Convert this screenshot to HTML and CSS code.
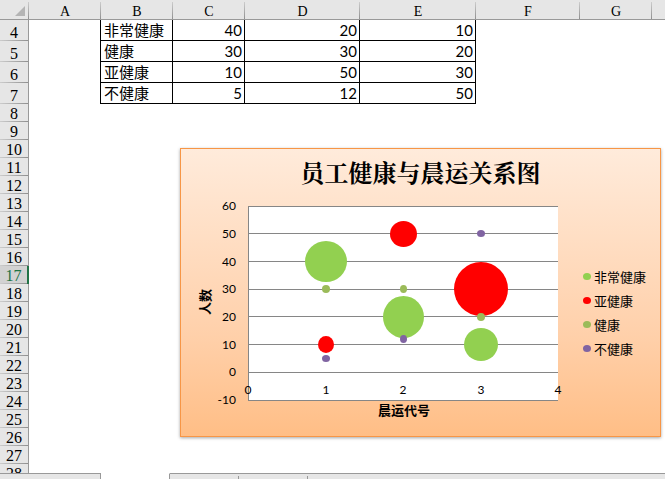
FILE: index.html
```html
<!DOCTYPE html>
<html lang="zh-CN">
<head>
<meta charset="utf-8">
<title>员工健康与晨运关系图</title>
<link rel="stylesheet" href="styles.css">
</head>
<body>
<main class="sheet">
  <table class="grid">
    <colgroup>
      <col class="col-head"><col class="col-std"><col class="col-std"><col class="col-std">
      <col class="col-d"><col class="col-e"><col class="col-f"><col class="col-std"><col>
    </colgroup>
    <thead>
      <tr>
        <th class="corner"><svg class="corner-mark" viewBox="0 0 10 10" aria-hidden="true"><path d="M10 0V10H0Z"/></svg></th>
        <th scope="col">A</th><th scope="col">B</th><th scope="col">C</th><th scope="col">D</th><th scope="col">E</th><th scope="col">F</th><th scope="col">G</th><th></th>
      </tr>
    </thead>
    <tbody>
      <tr class="data"><th scope="row">4</th><td class="edge"></td><td class="cell name">非常健康</td><td class="cell">40</td><td class="cell">20</td><td class="cell">10</td><td></td><td></td><td></td></tr>
      <tr class="data"><th scope="row">5</th><td class="edge"></td><td class="cell name">健康</td><td class="cell">30</td><td class="cell">30</td><td class="cell">20</td><td></td><td></td><td></td></tr>
      <tr class="data"><th scope="row">6</th><td class="edge"></td><td class="cell name">亚健康</td><td class="cell">10</td><td class="cell">50</td><td class="cell">30</td><td></td><td></td><td></td></tr>
      <tr class="data"><th scope="row">7</th><td class="edge"></td><td class="cell name">不健康</td><td class="cell">5</td><td class="cell">12</td><td class="cell">50</td><td></td><td></td><td></td></tr>
      <tr><th scope="row">8</th><td colspan="8"></td></tr>
      <tr><th scope="row">9</th><td colspan="8"></td></tr>
      <tr><th scope="row">10</th><td colspan="8"></td></tr>
      <tr><th scope="row">11</th><td colspan="8"></td></tr>
      <tr><th scope="row">12</th><td colspan="8"></td></tr>
      <tr><th scope="row">13</th><td colspan="8"></td></tr>
      <tr><th scope="row">14</th><td colspan="8"></td></tr>
      <tr><th scope="row">15</th><td colspan="8"></td></tr>
      <tr><th scope="row">16</th><td colspan="8"></td></tr>
      <tr class="current"><th scope="row">17</th><td colspan="8"></td></tr>
      <tr><th scope="row">18</th><td colspan="8"></td></tr>
      <tr><th scope="row">19</th><td colspan="8"></td></tr>
      <tr><th scope="row">20</th><td colspan="8"></td></tr>
      <tr><th scope="row">21</th><td colspan="8"></td></tr>
      <tr><th scope="row">22</th><td colspan="8"></td></tr>
      <tr><th scope="row">23</th><td colspan="8"></td></tr>
      <tr><th scope="row">24</th><td colspan="8"></td></tr>
      <tr><th scope="row">25</th><td colspan="8"></td></tr>
      <tr><th scope="row">26</th><td colspan="8"></td></tr>
      <tr><th scope="row">27</th><td colspan="8"></td></tr>
      <tr><th scope="row">28</th><td colspan="8"></td></tr>
    </tbody>
  </table>

  <section class="chart">
    <h1 class="chart-title">员工健康与晨运关系图</h1>
    <div class="chart-body">
      <svg class="plot" viewBox="190 198 380 224" role="img" aria-label="气泡图">
        <rect x="248" y="206" width="310" height="195" fill="#fff"/>
        <g class="lines">
          <path d="M248 206.5H558M248 233.5H558M248 261.5H558M248 289.5H558M248 316.5H558M248 344.5H558M248 372.5H558M248 400.5H558M248.5 206V401"/>
        </g>
        <g class="very-healthy">
          <ellipse cx="326" cy="261.5" rx="21" ry="20.5"/>
          <ellipse cx="403.5" cy="317" rx="20.5" ry="21"/>
          <ellipse cx="481" cy="344.5" rx="17" ry="16.5"/>
        </g>
        <g class="sub-healthy">
          <ellipse cx="326" cy="344.5" rx="8" ry="8.5"/>
          <ellipse cx="403.5" cy="234" rx="13.5" ry="13"/>
          <ellipse cx="481" cy="289" rx="27" ry="27"/>
        </g>
        <g class="healthy">
          <ellipse cx="326" cy="289" rx="4" ry="4"/>
          <ellipse cx="403.5" cy="289" rx="3.5" ry="4"/>
          <ellipse cx="481" cy="317" rx="4" ry="4"/>
        </g>
        <g class="unhealthy">
          <ellipse cx="326" cy="358.5" rx="4" ry="3.5"/>
          <ellipse cx="403.5" cy="339" rx="3.5" ry="4"/>
          <ellipse cx="481" cy="233.5" rx="4" ry="3.5"/>
        </g>
        <g class="ticks ticks-y">
          <text x="236" y="210">60</text><text x="236" y="238">50</text><text x="236" y="266">40</text><text x="236" y="293">30</text><text x="236" y="321">20</text><text x="236" y="349">10</text><text x="236" y="376">0</text><text x="236" y="404">-10</text>
        </g>
        <g class="ticks ticks-x">
          <text x="248" y="394">0</text><text x="326" y="394">1</text><text x="403" y="394">2</text><text x="481" y="394">3</text><text x="558" y="394">4</text>
        </g>
        <text class="axis-title" x="404" y="415">晨运代号</text>
        <text class="axis-title" transform="translate(210 302) rotate(-90)">人数</text>
      </svg>
      <ul class="legend">
        <li><svg class="dot very-healthy" viewBox="0 0 8 7" aria-hidden="true"><ellipse cx="4" cy="3.5" rx="4" ry="3.5"/></svg>非常健康</li>
        <li><svg class="dot sub-healthy" viewBox="0 0 8 7" aria-hidden="true"><ellipse cx="4" cy="3.5" rx="4" ry="3.5"/></svg>亚健康</li>
        <li><svg class="dot healthy" viewBox="0 0 8 7" aria-hidden="true"><ellipse cx="4" cy="3.5" rx="4" ry="3.5"/></svg>健康</li>
        <li><svg class="dot unhealthy" viewBox="0 0 8 7" aria-hidden="true"><ellipse cx="4" cy="3.5" rx="4" ry="3.5"/></svg>不健康</li>
      </ul>
    </div>
  </section>
</main>
<footer class="tabs">
  <div class="tabs-nav"></div>
  <div class="tab-active"></div>
  <div class="tab"></div>
  <div class="tab"></div>
  <div class="tabs-rest"></div>
</footer>
</body>
</html>
```
FILE: styles.css
```css
* {
  box-sizing: border-box;
}

body {
  margin: 0;
  height: 100vh;
  display: flex;
  flex-direction: column;
  overflow: hidden;
  background: #fff;
  color: #000;
  font-family: "Noto Sans CJK SC", sans-serif;
}

.sheet {
  position: relative;
  flex: 1;
  min-height: 0;
  overflow: hidden;
}

/* Cell grid */
.grid {
  width: 100%;
  table-layout: fixed;
  border-collapse: separate;
  border-spacing: 0;
}

.col-head { width: 29px; }
.col-std { width: 72px; }
.col-d { width: 115px; }
.col-e { width: 116px; }
.col-f { width: 104px; }

.grid th,
.grid td {
  height: 18px;
  padding: 0;
  line-height: 16px;
}

.grid th {
  background: #e6e6e6;
  font-family: "Liberation Serif", serif;
  font-size: 16px;
  font-weight: 400;
  text-align: center;
  vertical-align: bottom;
}

.grid thead th {
  height: 20px;
  border-bottom: 1px solid #999;
  font-size: 14px;
  line-height: 14px;
  background: linear-gradient(#ccc, #909090) right bottom / 1px 17px no-repeat #e6e6e6;
}

.grid thead th:last-child {
  background: #e6e6e6;
}

.grid tbody th {
  border-right: 1px solid #999;
  background: linear-gradient(to right, #ccc, #909090) left bottom / 100% 1px no-repeat #e6e6e6;
}

.grid .data th,
.grid .data td {
  height: 21px;
}

.grid .corner {
  padding: 0 4px 3px 0;
  text-align: right;
}

.corner-mark {
  display: block;
  width: 10px;
  height: 10px;
  margin-left: auto;
  fill: #b4b4b4;
}

.grid .edge {
  border-right: 1px solid #000;
}

.grid .cell {
  border-right: 1px solid #000;
  border-bottom: 1px solid #000;
  padding-right: 2px;
  font-family: Lato, sans-serif;
  font-size: 15px;
  text-align: right;
}

.grid .name {
  padding: 0 0 0 3px;
  font-family: "Noto Sans CJK SC", sans-serif;
  text-align: left;
}

.grid .current th {
  border-right: 2px solid #217346;
  background-color: #d2d2d2;
  color: #217346;
}

/* Floating chart */
.chart {
  position: absolute;
  left: 180px;
  top: 148px;
  width: 481px;
  padding: 7px 9px 14px;
  border: 1px solid #f79646;
  background: linear-gradient(#ffebdb, #ffd0aa 65%, #ffbe86);
  box-shadow: 0 1px 3px rgba(0, 0, 0, 0.35);
}

.chart-title {
  margin: 0 0 10px;
  font-family: "Noto Serif CJK SC", "Noto Sans CJK SC", serif;
  font-size: 24px;
  font-weight: 700;
  line-height: 32px;
  text-align: center;
}

.chart-body {
  display: flex;
  align-items: center;
  gap: 13px;
}

.plot {
  display: block;
  width: 380px;
  height: 224px;
}

.lines {
  fill: none;
  stroke: #868686;
}

.very-healthy { fill: #92d050; }
.sub-healthy { fill: #f00; }
.healthy { fill: #9bbb59; }
.unhealthy { fill: #8064a2; }

.ticks {
  font-family: Lato, sans-serif;
  font-size: 12px;
}

.ticks-y { text-anchor: end; }
.ticks-x { text-anchor: middle; }

.axis-title {
  font-size: 13px;
  font-weight: 700;
  text-anchor: middle;
}

.legend {
  margin: 0;
  padding: 5px 0 0;
  list-style: none;
  font-size: 13px;
  line-height: 24px;
  white-space: nowrap;
}

.legend li {
  display: flex;
  align-items: center;
  gap: 3px;
}

.dot {
  width: 8px;
  height: 7px;
}

/* Sheet tab strip */
.tabs {
  display: flex;
  height: 6px;
}

.tabs > div {
  border-top: 1px solid #999;
  background: #e6e6e6;
}

.tabs .tabs-nav {
  width: 101px;
  border-right: 1px solid #999;
}

.tabs .tab-active {
  width: 69px;
  border-top-color: #fff;
  border-right: 1px solid #999;
  background: #fff;
}

.tabs .tab {
  width: 69px;
  background: linear-gradient(#999, #999) right bottom / 1px 3px no-repeat #e6e6e6;
}

.tabs .tabs-rest {
  flex: 1;
}
```
